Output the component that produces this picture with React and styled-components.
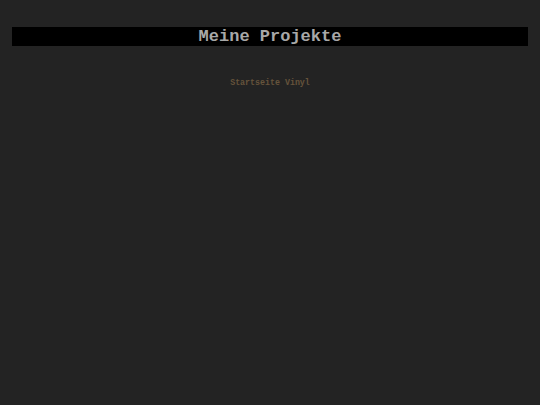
import React from 'react';
import styled, { createGlobalStyle } from 'styled-components';

const GlobalStyle = createGlobalStyle`
  html, body {
    margin: 0;
    padding: 0;
    background: #232323;
    min-height: 100%;
  }
  body {
    font-family: "Liberation Mono", "Courier New", monospace;
  }
`;

const Page = styled.div`
  padding: 27px 12px 0;
`;

const Title = styled.h1`
  margin: 0;
  height: 19px;
  line-height: 19px;
  background: #000;
  color: #a8a8a8;
  font-size: 17px;
  font-weight: bold;
  text-align: center;
`;

const ProjectList = styled.nav`
  display: flex;
  flex-direction: column;
  align-items: center;
  padding-top: 32px;
`;

const ProjectLink = styled.a`
  color: #66533b;
  font-size: 8.3px;
  font-weight: bold;
  text-decoration: none;
`;

const projects = [{ name: 'Startseite Vinyl', href: '#' }];

const App = () => (
  <Page>
    <GlobalStyle />
    <Title>Meine Projekte</Title>
    <ProjectList>
      {projects.map(p => (
        <ProjectLink key={p.name} href={p.href}>{p.name}</ProjectLink>
      ))}
    </ProjectList>
  </Page>
);

export default App;
